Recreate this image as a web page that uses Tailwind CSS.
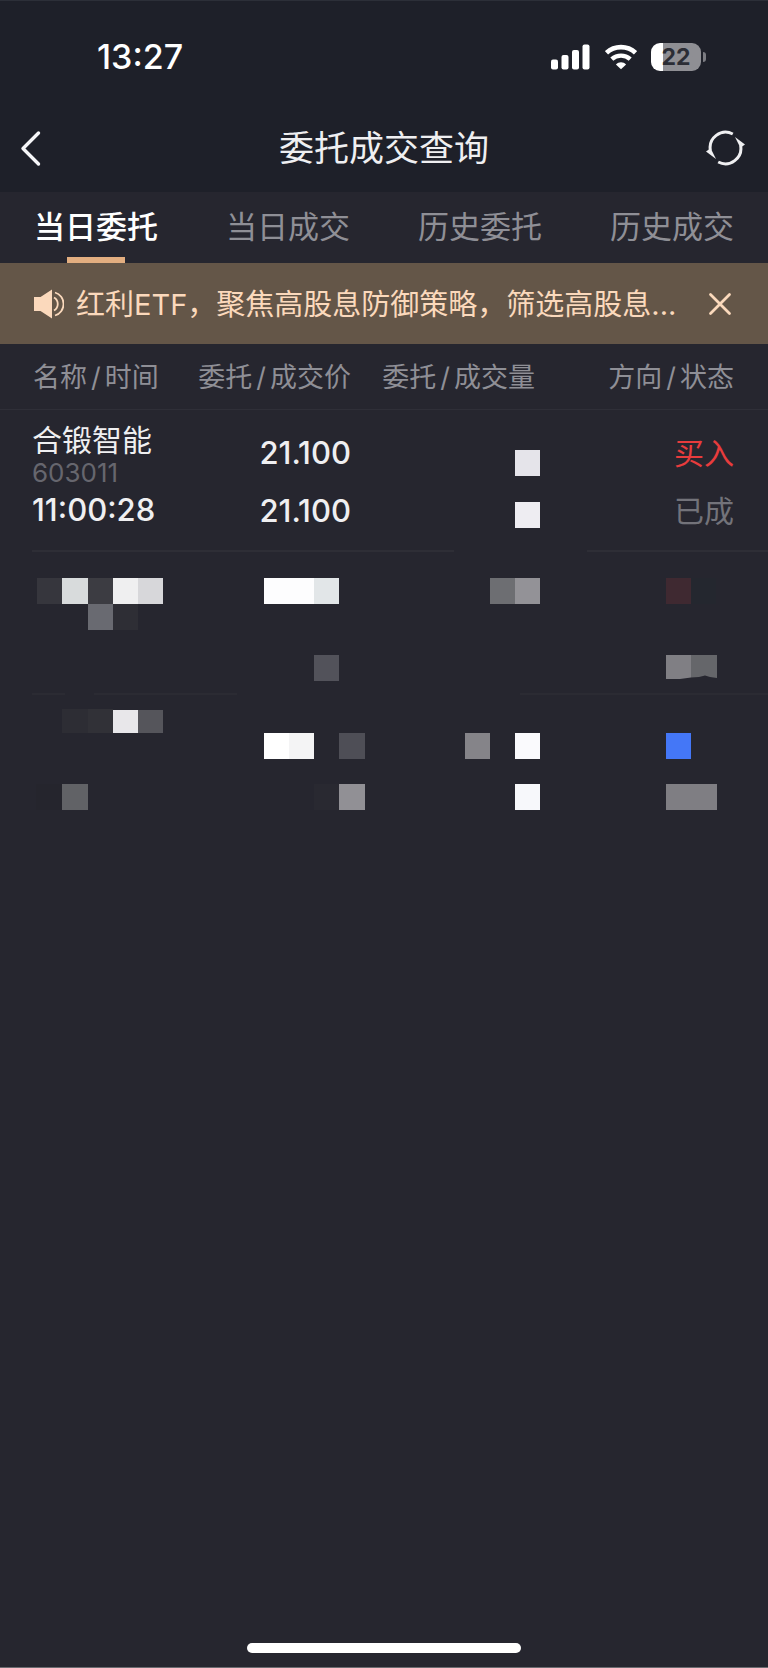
<!DOCTYPE html>
<html lang="zh-CN">
<head>
  <meta charset="UTF-8"/>
  <title>委托成交查询</title>
  <meta name="viewport" content="width=device-width,initial-scale=1"/>
  <script src="https://cdn.jsdelivr.net/npm/@tailwindcss/browser@4"></script>
</head>
<body class="bg-[#26262f] text-[#efeff1] font-['Inter','Noto_Sans_CJK_SC',sans-serif]">
  <div class="min-h-screen flex flex-col border-b border-[#6b6b70]">

    <header class="bg-[#1e2029] border-t border-[#2c2f38]">
      <!-- status bar -->
      <div class="flex items-center justify-between pt-[35px] pl-[97px] pr-[62px]">
        <time class="text-[34px] leading-[42px] font-medium text-white">13:27</time>
        <div class="flex items-center gap-3.5">
          <svg class="w-10 h-[26px]" viewBox="0 0 40 26" fill="#fff" aria-label="信号">
            <rect x="0" y="15.5" width="7" height="10" rx="2"/>
            <rect x="10.5" y="11" width="7" height="14.5" rx="2"/>
            <rect x="21" y="6" width="7" height="19.5" rx="2"/>
            <rect x="31.5" y="0.5" width="7" height="25" rx="2"/>
          </svg>
          <svg class="w-8 h-[26px]" viewBox="0 0 32 26" fill="none" stroke="#fff" aria-label="Wi-Fi">
            <path d="M1.5 8.8C9.5 1.2 22.5 1.2 30.5 8.8" stroke-width="4.6"/>
            <path d="M6.8 15.2C12 10.4 20 10.4 25.2 15.2" stroke-width="4.4"/>
            <path d="M16 25.2L10.9 20.4C13.800 17.600 18.200 17.600 21.100 20.4Z" fill="#fff" stroke="none"/>
          </svg>
          <div class="flex items-center gap-0.5">
            <div class="w-[50px] h-7 rounded-[9px] bg-linear-to-r from-white from-24% to-[#8f8f94] to-24% text-center text-[23px] leading-7 font-bold text-[#2b2d35]">22</div>
            <div class="w-[3px] h-2.5 rounded-r-full bg-[#7c7c82]"></div>
          </div>
        </div>
      </div>

      <!-- nav bar -->
      <div class="flex items-center justify-between pt-8 pb-1.5 px-5">
        <button class="w-12 h-[76px] flex items-center" aria-label="返回">
          <svg class="w-7 h-10" viewBox="0 0 28 40" fill="none" stroke="#f6f6f8" stroke-width="3.4" stroke-linecap="round" stroke-linejoin="round">
            <path d="M18.500 5L3 20.500L18.500 36"/>
          </svg>
        </button>
        <h1 class="text-[35px] leading-[44px] font-normal">委托成交查询</h1>
        <button class="w-12 h-[76px] flex items-center justify-end" aria-label="刷新">
          <svg class="w-11 h-10" viewBox="0 0 44 40" fill="none" stroke="#efeff1" stroke-width="3">
            <path d="M6.500 23A15.500 15.500 0 0 1 28.800 6"/>
            <path d="M36.500 17A15.500 15.500 0 0 1 14.200 34"/>
            <path d="M31 9L41 16.500L37.500 19L35 17Z" fill="#efeff1" stroke="none"/>
            <path d="M12 31L2 23.500L5.500 21L8 23Z" fill="#efeff1" stroke="none"/>
          </svg>
        </button>
      </div>
    </header>

    <nav class="grid grid-cols-4 text-[31px] leading-[70px] text-center text-[#8f8f96]">
      <a href="#" class="relative h-[71px] font-medium text-white">当日委托
        <span class="absolute bottom-0 left-1/2 -translate-x-1/2 w-[58px] h-1.5 bg-[#e3ae80]"></span>
      </a>
      <a href="#">当日成交</a>
      <a href="#">历史委托</a>
      <a href="#">历史成交</a>
    </nav>

    <!-- notice -->
    <div class="h-[81px] flex items-center bg-[#645648] pl-8 pr-[34px] text-[#fbd9bc]">
      <svg class="w-8 h-8 shrink-0" viewBox="0 0 32 32" fill="none" stroke="#fbd9bc" stroke-width="1.8">
        <path d="M2 9H8.500L20 1.500V30.500L8.500 23H2Z" fill="#fbd9bc" stroke="none"/>
        <path d="M22 9.500A7.500 7.500 0 0 1 22 22.500"/>
        <path d="M23 4.500A12 12 0 0 1 23 27.500"/>
      </svg>
      <p class="ml-3 pt-0.5 whitespace-nowrap text-[29px] leading-10">红利ETF，聚焦高股息防御策略，筛选高股息...</p>
      <button class="ml-auto" aria-label="关闭">
        <svg class="w-7 h-7" viewBox="0 0 28 28" fill="none" stroke="#fbd9bc" stroke-width="2.8" stroke-linecap="round">
          <path d="M4.500 4.500L23.500 23.500M23.500 4.500L4.500 23.500"/>
        </svg>
      </button>
    </div>

    <table class="w-full table-fixed border-collapse text-[31px] leading-9">
      <thead class="text-[27px] text-[#8f8f96] border-b border-[#2f2f38]">
        <tr class="h-[65px]">
          <th class="w-[183px] pt-1 pl-[33px] font-normal text-left whitespace-nowrap">名称<span class="mx-1">/</span>时间</th>
          <th class="w-[168px] pt-1 font-normal text-right whitespace-nowrap">委托<span class="mx-1">/</span>成交价</th>
          <th class="w-[184px] pt-1 font-normal text-right whitespace-nowrap">委托<span class="mx-1">/</span>成交量</th>
          <th class="pt-1 pr-[34px] font-normal text-right whitespace-nowrap">方向<span class="mx-1">/</span>状态</th>
        </tr>
      </thead>
      <tbody class="align-top">
        <tr class="relative h-[143px]">
          <td class="pl-8 pt-3">
            <div class="text-[30px]">合锻智能</div>
            <div class="text-[26px] leading-[30px] text-[#66666e]">603011</div>
            <div class="mt-1 font-medium">11:00:28</div>
          </td>
          <td class="pt-[25px] text-right font-medium">
            <div>21.100</div>
            <div class="mt-[22px]">21.100</div>
          </td>
          <td>
            <svg class="ml-auto w-[23px] h-[142px] overflow-visible" viewBox="0 0 23 142">
              <rect x="3" y="40" width="25" height="26" fill="#e5e4ea"/>
              <rect x="3" y="92" width="25" height="26" fill="#eeedf2"/>
            </svg>
          </td>
          <td class="pr-[34px] pt-[25px] text-right text-[30px]">
            <div class="text-[#e83c3d]">买入</div>
            <div class="mt-[22px] text-[#73737a]">已成</div>
            <span class="absolute bottom-0 left-8 w-[55%] h-0.5 bg-[#2e2e36]"></span>
            <span class="absolute bottom-0 right-0 w-[181px] h-0.5 bg-[#2e2e36]"></span>
          </td>
        </tr>

        <!-- masked rows -->
        <tr class="relative h-[143px]">
          <td class="pl-8">
            <svg class="w-[136px] h-[142px]" viewBox="0 0 136 142">
              <rect x="5" y="26" width="25" height="26" fill="#36363d"/>
              <rect x="30" y="26" width="26" height="26" fill="#d8dbdc"/>
              <rect x="56" y="26" width="25" height="26" fill="#3c3c42"/>
              <rect x="81" y="26" width="25" height="26" fill="#efeff0"/>
              <rect x="106" y="26" width="25" height="26" fill="#d7d7da"/>
              <rect x="56" y="52" width="25" height="26" fill="#696a71"/>
              <rect x="81" y="52" width="25" height="26" fill="#2e2e35"/>
            </svg>
          </td>
          <td>
            <svg class="ml-auto w-[88px] h-[142px] overflow-visible" viewBox="0 0 88 142">
              <rect x="1" y="26" width="50" height="26" fill="#fdfdfe"/>
              <rect x="51" y="26" width="25" height="26" fill="#e2e6e8"/>
              <rect x="51" y="103" width="25" height="26" fill="#52525a"/>
            </svg>
          </td>
          <td>
            <svg class="ml-auto w-[47px] h-[142px] overflow-visible" viewBox="0 0 47 142">
              <rect x="2" y="26" width="25" height="26" fill="#6d6e72"/>
              <rect x="27" y="26" width="25" height="26" fill="#939297"/>
            </svg>
          </td>
          <td class="pr-[34px]">
            <svg class="ml-auto w-[68px] h-[142px]" viewBox="0 0 68 142">
              <rect x="0" y="26" width="25" height="26" fill="#3f2931"/>
              <rect x="25" y="26" width="25" height="26" fill="#24272f"/>
              <path d="M0 103H25V125.500L14 127H0Z" fill="#807f84"/>
              <path d="M25 103H51V126L44 125L39 123.500L33 125L25 125.500Z" fill="#65666a"/>
            </svg>
            <span class="absolute bottom-0 left-8 w-[33px] h-0.5 bg-[#2b2b33]"></span>
            <span class="absolute bottom-0 left-[94px] w-[143px] h-0.5 bg-[#2b2b33]"></span>
            <span class="absolute bottom-0 right-0 w-[248px] h-0.5 bg-[#2b2b33]"></span>
          </td>
        </tr>
        <tr class="h-[143px]">
          <td class="pl-8">
            <svg class="w-[136px] h-[142px]" viewBox="0 0 136 142">
              <rect x="30" y="14" width="26" height="24" fill="#2d2d34"/>
              <rect x="56" y="14" width="25" height="24" fill="#313137"/>
              <rect x="81" y="15" width="25" height="23" fill="#e8e7ea"/>
              <rect x="106" y="15" width="25" height="23" fill="#55555b"/>
              <rect x="4" y="89" width="26" height="26" fill="#25252d"/>
              <rect x="30" y="89" width="26" height="26" fill="#616266"/>
            </svg>
          </td>
          <td>
            <svg class="ml-auto w-[88px] h-[142px] overflow-visible" viewBox="0 0 88 142">
              <rect x="1" y="38" width="25" height="26" fill="#fff"/>
              <rect x="26" y="38" width="25" height="26" fill="#f4f4f5"/>
              <rect x="76" y="38" width="26" height="26" fill="#4e4e56"/>
              <rect x="51" y="89" width="25" height="26" fill="#292931"/>
              <rect x="76" y="89" width="26" height="26" fill="#919095"/>
            </svg>
          </td>
          <td>
            <svg class="ml-auto w-[72px] h-[142px] overflow-visible" viewBox="0 0 72 142">
              <rect x="2" y="38" width="25" height="26" fill="#858489"/>
              <rect x="52" y="38" width="25" height="26" fill="#fafafd"/>
              <rect x="52" y="89" width="25" height="26" fill="#f7f8fb"/>
            </svg>
          </td>
          <td class="pr-[34px]">
            <svg class="ml-auto w-[68px] h-[142px]" viewBox="0 0 68 142">
              <rect x="0" y="38" width="25" height="26" fill="#4477f7"/>
              <rect x="0" y="89" width="51" height="26" fill="#7f7e83"/>
            </svg>
          </td>
        </tr>
      </tbody>
    </table>

    <!-- home indicator -->
    <div class="mt-auto mx-auto mb-3.5 w-[274px] h-2.5 rounded-full bg-white"></div>
  </div>
</body>
</html>
